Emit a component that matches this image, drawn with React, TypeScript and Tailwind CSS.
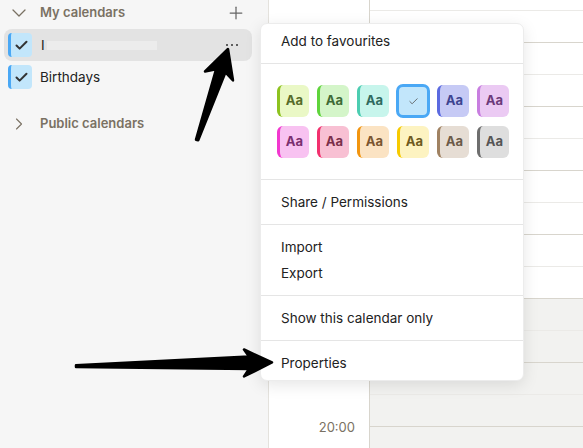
import { Check, ChevronDown, ChevronRight, Plus } from 'lucide-react';

type Swatch = { bg: string; edge: string; text: string; selected?: boolean };

const swatches: Swatch[] = [
  { bg: 'bg-[#eaf8c6]', edge: 'border-[#8dc21f]', text: 'text-[#566b2a]' },
  { bg: 'bg-[#d4f5c9]', edge: 'border-[#5fd43b]', text: 'text-[#3e6a36]' },
  { bg: 'bg-[#c7f5ec]', edge: 'border-[#4ccdb1]', text: 'text-[#2f6a5e]' },
  { bg: 'bg-[#c2e6fb]', edge: 'border-[#4aa8f5]', text: 'text-[#555]', selected: true },
  { bg: 'bg-[#c6caf5]', edge: 'border-[#5b6ae0]', text: 'text-[#3d4490]' },
  { bg: 'bg-[#ebcaf3]', edge: 'border-[#c87ee0]', text: 'text-[#6b3a7a]' },
  { bg: 'bg-[#f8c2f1]', edge: 'border-[#f237cf]', text: 'text-[#7a2f6f]' },
  { bg: 'bg-[#f8c0d3]', edge: 'border-[#f2306e]', text: 'text-[#7a2f4a]' },
  { bg: 'bg-[#fbe3c3]', edge: 'border-[#f2950f]', text: 'text-[#7a5530]' },
  { bg: 'bg-[#fdf3c1]', edge: 'border-[#f7ca00]', text: 'text-[#6e5a20]' },
  { bg: 'bg-[#e6ddd4]', edge: 'border-[#a08262]', text: 'text-[#6b5a48]' },
  { bg: 'bg-[#dedede]', edge: 'border-[#6e6e6e]', text: 'text-[#555]' },
];

function CalendarBox() {
  return (
    <div className="w-[24px] h-[24px] rounded-[4px] bg-[#c2e6fb] border-l-[3px] border-[#4aa8f5] flex items-center justify-center shrink-0">
      <Check size={15} strokeWidth={3.2} className="text-[#333]" />
    </div>
  );
}

function Sidebar() {
  return (
    <div className="w-[269px] h-full bg-[#f6f6f6] border-r border-[#e4e2dd] shrink-0 px-[4px]">
      <div className="h-[25px] flex items-center text-[#7a7163]">
        <div className="w-[24px] flex justify-center ml-[3px]">
          <ChevronDown size={24} strokeWidth={1.3} />
        </div>
        <span className="ml-[9px] text-[13px] font-semibold">My calendars</span>
        <Plus size={20} strokeWidth={1.5} className="ml-auto mr-[18px] text-[#666]" />
      </div>

      <div className="mt-[4px] h-[32px] w-[248px] rounded-[8px] bg-[#e3e3e3] flex items-center px-[4px]">
        <CalendarBox />
        <span className="ml-[9px] text-[13.5px] text-[#222]">I</span>
        <span className="ml-[2px] h-[9px] w-[110px] bg-[#ececec]" />
        <div className="ml-auto mr-[10px] flex gap-[2.5px]">
          <span className="w-[2.5px] h-[2.5px] rounded-full bg-[#333]" />
          <span className="w-[2.5px] h-[2.5px] rounded-full bg-[#333]" />
          <span className="w-[2.5px] h-[2.5px] rounded-full bg-[#333]" />
        </div>
      </div>

      <div className="h-[32px] flex items-center px-[4px]">
        <CalendarBox />
        <span className="ml-[8px] text-[13.5px] text-[#222]">Birthdays</span>
      </div>

      <div className="mt-[19px] h-[24px] flex items-center text-[#7a7163]">
        <div className="w-[20px] flex justify-center ml-[5px]">
          <ChevronRight size={20} strokeWidth={1.3} />
        </div>
        <span className="ml-[11px] text-[13px] font-semibold">Public calendars</span>
      </div>
    </div>
  );
}

function DayGrid() {
  const rows = Array.from({ length: 14 }, (_, k) => k);
  return (
    <div className="flex-1 h-full flex flex-col">
      <div className="h-[10px] shrink-0 bg-white" />
      {rows.map((k) => (
        <div
          key={k}
          className={
            'h-[32px] shrink-0 border-t ' +
            (k % 2 === 0 ? 'border-[#ebeae7] ' : 'border-[#d8d5cd] ') +
            (k >= 9 ? 'bg-[#f2f2f0]' : 'bg-white')
          }
        />
      ))}
    </div>
  );
}

function MenuItem({ label }: { label: string }) {
  return <div className="h-[26px] flex items-center px-[20px] text-[13.5px] text-[#222]">{label}</div>;
}

function ContextMenu() {
  return (
    <div className="absolute left-[260px] top-[23px] w-[264px] bg-white rounded-[7px] border border-[#ececec] shadow-[0_4px_16px_rgba(0,0,0,0.10)]">
      <div className="pt-[4px] pb-[9px] border-b border-[#e5e5e5]">
        <MenuItem label="Add to favourites" />
      </div>
      <div className="pt-[21px] pb-[21px] pl-[16px] border-b border-[#e5e5e5]">
        <div className="grid grid-cols-[repeat(6,32px)] gap-x-[8px] gap-y-[8px]">
          {swatches.map((s, i) =>
            s.selected ? (
              <div
                key={i}
                className={`w-[34px] h-[34px] -ml-[1px] -mt-[1px] rounded-[7px] border-[3px] ${s.edge} ${s.bg} flex items-center justify-center`}
              >
                <Check size={11} strokeWidth={1.8} className="text-[#555]" />
              </div>
            ) : (
              <div
                key={i}
                className={`w-[32px] h-[32px] rounded-[6px] border-l-[3px] ${s.edge} ${s.bg} ${s.text} flex items-center justify-center text-[13px] font-bold`}
              >
                Aa
              </div>
            )
          )}
        </div>
      </div>
      <div className="py-[9px] border-b border-[#e5e5e5]">
        <MenuItem label="Share / Permissions" />
      </div>
      <div className="py-[9px] border-b border-[#e5e5e5]">
        <MenuItem label="Import" />
        <MenuItem label="Export" />
      </div>
      <div className="py-[9px] border-b border-[#e5e5e5]">
        <MenuItem label="Show this calendar only" />
      </div>
      <div className="pt-[9px] pb-[4px]">
        <MenuItem label="Properties" />
      </div>
    </div>
  );
}

function Arrows() {
  return (
    <svg className="absolute inset-0 pointer-events-none" width="583" height="448" viewBox="0 0 583 448">
      <path
        d="M196 139.7 L216.1 69.2 L205 71.5 L228 49 L233 80.5 L225.5 72.4 L198.2 140.3 Z"
        fill="#000"
        stroke="#000"
        strokeWidth="2.5"
        strokeLinejoin="round"
      />
      <path
        d="M76 365.3 L249 356.5 L244 349.5 L272 362.5 L244 376.5 L249 369 L76 367 Z"
        fill="#000"
        stroke="#000"
        strokeWidth="2.5"
        strokeLinejoin="round"
      />
    </svg>
  );
}

export default function App() {
  return (
    <div className="relative w-[583px] h-[448px] overflow-hidden flex bg-white font-['Inter','Noto_Sans',sans-serif]">
      <Sidebar />
      <div className="w-[101px] h-full bg-white border-r border-[#d8d5cd] shrink-0 flex flex-col justify-end items-end pr-[14px] pb-[11px]">
        <span className="text-[13px] leading-[20px] text-[#7a7163]">20:00</span>
      </div>
      <DayGrid />
      <ContextMenu />
      <Arrows />
    </div>
  );
}
